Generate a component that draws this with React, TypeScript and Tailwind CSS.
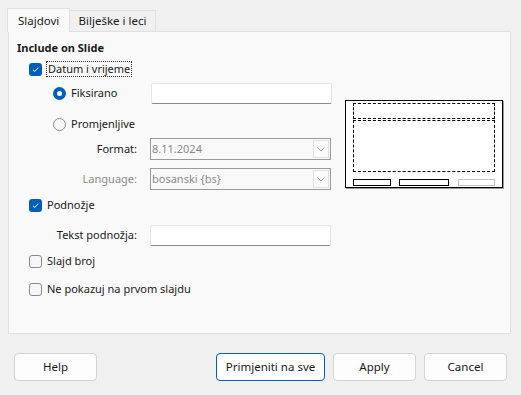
import React from "react";

const font = { fontFamily: '"Noto Sans", "Segoe UI", sans-serif' };

function Check({ checked }: { checked: boolean }) {
  return checked ? (
    <span className="w-[13px] h-[13px] rounded-[3px] bg-[#005fb8] flex items-center justify-center shrink-0">
      <svg width="9" height="9" viewBox="0 0 9 9">
        <path d="M1.8 4.7 L3.7 6.5 L7.3 2.6" fill="none" stroke="white" strokeWidth="1" />
      </svg>
    </span>
  ) : (
    <span className="w-[13px] h-[13px] rounded-[3px] border border-[#8a8a8a] bg-[#f6f6f6] shrink-0" />
  );
}

function Radio({ checked }: { checked: boolean }) {
  return checked ? (
    <span className="w-[13px] h-[13px] rounded-full bg-[#005fb8] flex items-center justify-center shrink-0">
      <span className="w-[5px] h-[5px] rounded-full bg-white" />
    </span>
  ) : (
    <span className="w-[13px] h-[13px] rounded-full border border-[#8a8a8a] bg-[#f6f6f6] shrink-0" />
  );
}

function TextInput() {
  return (
    <div className="w-[181px] h-[21px] bg-white border border-[#e5e5e5] border-b-[#8a8a8a] rounded-[2px]" />
  );
}

function Combo({ value }: { value: string }) {
  return (
    <div className="w-[181px] h-[22px] border border-[#9a9a9a] bg-[#f9f9f9] flex items-center">
      <span className="flex-1 pl-[1px] text-[#8a8a8a]">{value}</span>
      <span className="w-[16px] h-[18px] mr-[1px] border border-[#e2e2e2] bg-[#fbfbfb] flex items-center justify-center">
        <svg width="8" height="5" viewBox="0 0 8 5">
          <path d="M0.5 0.5 L4 4 L7.5 0.5" fill="none" stroke="#b0b0b0" strokeWidth="1" />
        </svg>
      </span>
    </div>
  );
}

function Btn({ label, primary, w }: { label: string; primary?: boolean; w: string }) {
  return (
    <div
      className={`${w} h-[28px] rounded-[4px] bg-[#fdfdfd] border flex items-center justify-center text-[#1a1a1a] ${
        primary ? "border-[#005fb8]" : "border-[#d3d3d3]"
      }`}
    >
      {label}
    </div>
  );
}

export default function App() {
  return (
    <div className="w-[521px] h-[395px] bg-[#f0f0f0] text-[11px] text-[#1a1a1a] relative" style={font}>
      {/* tabs */}
      <div className="flex items-end h-[31px] pl-[7px] pt-[8px]">
        <div className="w-[63px] h-[24px] bg-[#f9f9f9] border border-b-0 border-[#e0e0e0] flex items-center pl-[10px] relative z-10 -mb-[1px] text-[11.5px]">
          Slajdovi
        </div>
        <div className="w-[86px] h-[21px] bg-[#f0f0f0] border border-l-0 border-b-0 border-[#e0e0e0] flex items-center justify-center text-[11.5px]">
          Bilješke i leci
        </div>
      </div>
      {/* panel */}
      <div className="mx-[8px] w-[503px] h-[303px] bg-[#f9f9f9] border border-[#e0e0e0] flex">
        <div className="w-[323px] pl-[8px] flex flex-col">
          <div className="mt-[7px] h-[18px] flex items-center font-bold">Include on Slide</div>
          <div className="mt-[4px] h-[16px] flex items-center pl-[12px] gap-[4px]">
            <Check checked />
            <span className="border border-dotted border-[#333] px-[1px] leading-[14px]">Datum i vrijeme</span>
          </div>
          <div className="mt-[5px] h-[22px] flex items-center pl-[36px]">
            <Radio checked />
            <span className="ml-[5px] w-[80px]">Fiksirano</span>
            <TextInput />
          </div>
          <div className="mt-[10px] h-[20px] flex items-center pl-[36px]">
            <Radio checked={false} />
            <span className="ml-[5px]">Promjenljive</span>
          </div>
          <div className="mt-[4px] h-[22px] flex items-center">
            <span className="w-[120px] text-right">Format:</span>
            <span className="ml-[13px]"><Combo value="8.11.2024" /></span>
          </div>
          <div className="mt-[8px] h-[22px] flex items-center">
            <span className="w-[120px] text-right text-[#8a8a8a]">Language:</span>
            <span className="ml-[13px]"><Combo value="bosanski {bs}" /></span>
          </div>
          <div className="mt-[7px] h-[16px] flex items-center pl-[12px] gap-[5px]">
            <Check checked />
            <span>Podnožje</span>
          </div>
          <div className="mt-[11px] h-[22px] flex items-center">
            <span className="w-[120px] text-right">Tekst podnožja:</span>
            <span className="ml-[13px]"><TextInput /></span>
          </div>
          <div className="mt-[7px] h-[16px] flex items-center pl-[12px] gap-[5px]">
            <Check checked={false} />
            <span>Slajd broj</span>
          </div>
          <div className="mt-[12px] h-[16px] flex items-center pl-[12px] gap-[5px]">
            <Check checked={false} />
            <span>Ne pokazuj na prvom slajdu</span>
          </div>
        </div>
        {/* preview */}
        <div className="ml-[13px] mt-[68px]">
          <div className="w-[158px] h-[88px] bg-white border border-black shadow-[1px_1px_0_0_#9a9a9a] flex flex-col px-[7px] pt-[2px]">
            <div className="h-[16px] border border-dashed border-black" />
            <div className="mt-[1px] h-[52px] border border-dashed border-black" />
            <div className="mt-[7px] flex gap-[8px]">
              <div className="w-[38px] h-[7px] border border-black" />
              <div className="w-[50px] h-[7px] border border-black" />
              <div className="ml-[1px] w-[37px] h-[7px] border border-[#c4c4c4]" />
            </div>
          </div>
        </div>
      </div>
      {/* buttons */}
      <div className="flex mt-[19px] px-[14px] text-[11.5px]">
        <Btn label="Help" w="w-[83px]" />
        <div className="flex-1" />
        <Btn label="Primjeniti na sve" primary w="w-[109px]" />
        <div className="ml-[8px]"><Btn label="Apply" w="w-[83px]" /></div>
        <div className="ml-[8px]"><Btn label="Cancel" w="w-[83px]" /></div>
      </div>
    </div>
  );
}
